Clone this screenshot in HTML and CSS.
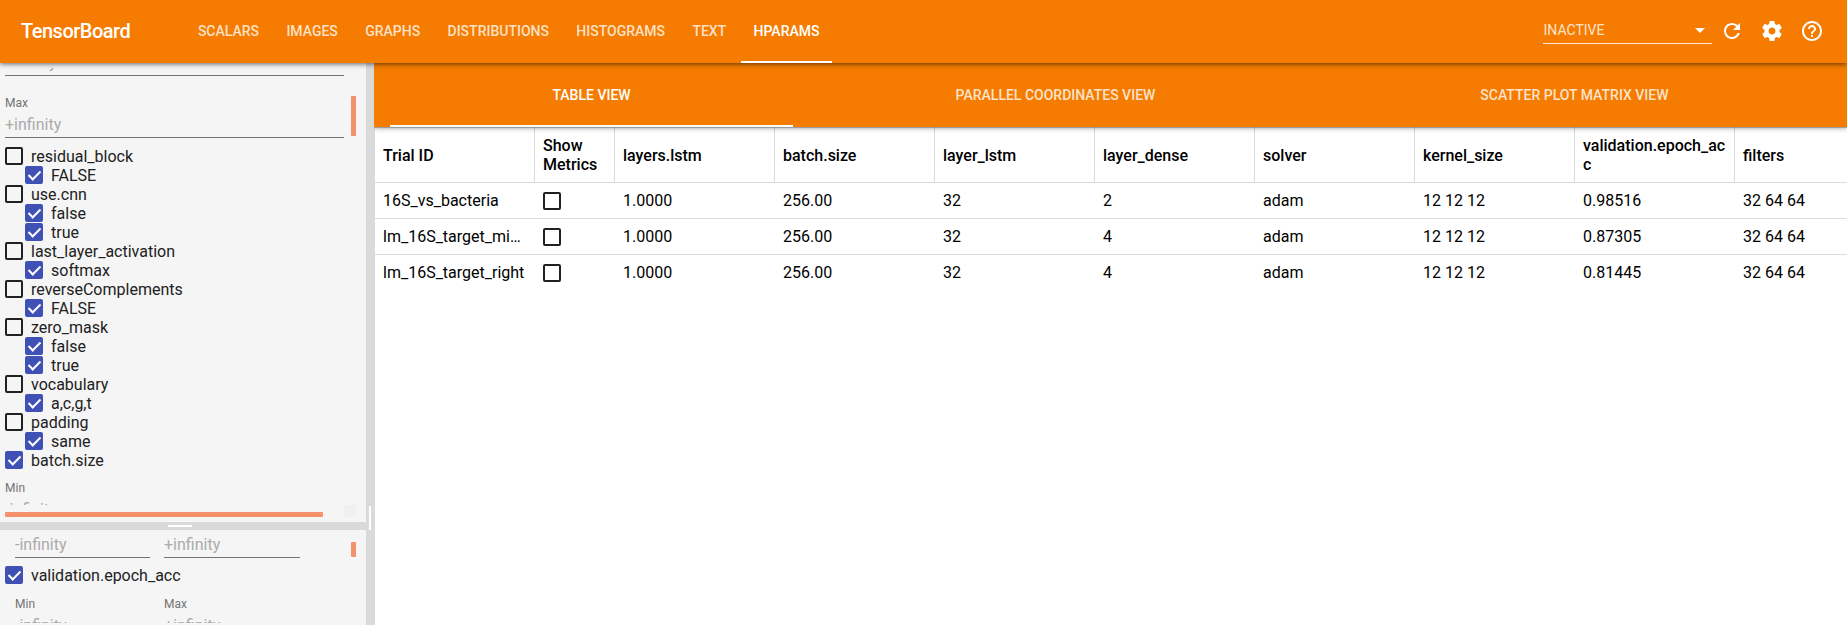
FILE: index.html
```html
<!DOCTYPE html>
<html lang="en">
<head>
<meta charset="utf-8">
<title>TensorBoard</title>
<link rel="stylesheet" href="styles.css">
</head>
<body>
<header class="toolbar">
  <div class="brand">TensorBoard</div>
  <nav class="plugins">
    <a class="plugin">SCALARS</a>
    <a class="plugin">IMAGES</a>
    <a class="plugin">GRAPHS</a>
    <a class="plugin">DISTRIBUTIONS</a>
    <a class="plugin">HISTOGRAMS</a>
    <a class="plugin">TEXT</a>
    <a class="plugin active">HPARAMS</a>
  </nav>
  <div class="inactive-menu"><span>INACTIVE</span><svg class="arrow" width="24" height="24" viewBox="0 0 24 24"><path d="M7 10l5 5 5-5z"/></svg></div>
  <div class="actions">
    <svg width="24" height="24" viewBox="0 0 24 24"><path d="M17.65 6.35C16.2 4.9 14.21 4 12 4c-4.42 0-7.99 3.58-7.99 8s3.57 8 7.99 8c3.73 0 6.84-2.55 7.73-6h-2.08c-.82 2.33-3.04 4-5.65 4-3.31 0-6-2.69-6-6s2.69-6 6-6c1.66 0 3.14.69 4.22 1.78L13 11h7V4l-2.35 2.35z"/></svg>
    <svg width="24" height="24" viewBox="0 0 24 24"><path d="M19.43 12.98c.04-.32.07-.64.07-.98s-.03-.66-.07-.98l2.11-1.65c.19-.15.24-.42.12-.64l-2-3.46c-.12-.22-.39-.3-.61-.22l-2.49 1c-.52-.4-1.08-.73-1.69-.98l-.38-2.65C14.46 2.18 14.25 2 14 2h-4c-.25 0-.46.18-.49.42l-.38 2.65c-.61.25-1.17.59-1.69.98l-2.49-1c-.23-.09-.49 0-.61.22l-2 3.46c-.13.22-.07.49.12.64l2.11 1.65c-.04.32-.07.65-.07.98s.03.66.07.98l-2.11 1.65c-.19.15-.24.42-.12.64l2 3.46c.12.22.39.3.61.22l2.49-1c.52.4 1.08.73 1.69.98l.38 2.65c.03.24.24.42.49.42h4c.25 0 .46-.18.49-.42l.38-2.65c.61-.25 1.17-.59 1.69-.98l2.49 1c.23.09.49 0 .61-.22l2-3.46c.12-.22.07-.49-.12-.64l-2.11-1.65zM12 15.5c-1.93 0-3.5-1.57-3.5-3.5s1.57-3.5 3.5-3.5 3.5 1.57 3.5 3.5-1.57 3.5-3.5 3.5z"/></svg>
    <svg width="24" height="24" viewBox="0 0 24 24"><path d="M11 18h2v-2h-2v2zm1-16C6.48 2 2 6.48 2 12s4.48 10 10 10 10-4.48 10-10S17.52 2 12 2zm0 18c-4.41 0-8-3.59-8-8s3.59-8 8-8 8 3.59 8 8-3.59 8-8 8zm0-14c-2.21 0-4 1.79-4 4h2c0-1.1.9-2 2-2s2 .9 2 2c0 2-3 1.75-3 5h2c0-2.25 3-2.5 3-5 0-2.21-1.79-4-4-4z"/></svg>
  </div>
</header>
<main class="dashboard">
  <aside class="sidebar">
    <section class="pane hyperparameters">
      <div class="scroll">
        <div class="scrolled-upper">
          <div class="field unlabelled"><div class="input">-infinity</div></div>
          <div class="field"><label>Max</label><div class="input">+infinity</div></div>
          <div class="option"><i class="box"></i>residual_block</div>
          <div class="option value"><i class="box checked"></i>FALSE</div>
          <div class="option"><i class="box"></i>use.cnn</div>
          <div class="option value"><i class="box checked"></i>false</div>
          <div class="option value"><i class="box checked"></i>true</div>
          <div class="option"><i class="box"></i>last_layer_activation</div>
          <div class="option value"><i class="box checked"></i>softmax</div>
          <div class="option"><i class="box"></i>reverseComplements</div>
          <div class="option value"><i class="box checked"></i>FALSE</div>
          <div class="option"><i class="box"></i>zero_mask</div>
          <div class="option value"><i class="box checked"></i>false</div>
          <div class="option value"><i class="box checked"></i>true</div>
          <div class="option"><i class="box"></i>vocabulary</div>
          <div class="option value"><i class="box checked"></i>a,c,g,t</div>
          <div class="option"><i class="box"></i>padding</div>
          <div class="option value"><i class="box checked"></i>same</div>
          <div class="option"><i class="box checked"></i>batch.size</div>
          <div class="field"><label>Min</label><div class="input">-infinity</div></div>
        </div>
      </div>
      <div class="vtrack"><div class="thumb vthumb-upper"></div></div>
      <div class="htrack"><div class="thumb hthumb"></div></div>
      <div class="corner"></div>
    </section>
    <div class="splitter-h"><div class="grip-h"></div></div>
    <section class="pane metrics">
      <div class="scroll">
        <div class="scrolled-lower">
          <div class="range">
            <div class="field unlabelled"><div class="input">-infinity</div></div>
            <div class="field unlabelled"><div class="input">+infinity</div></div>
          </div>
          <div class="option metric"><i class="box checked"></i>validation.epoch_acc</div>
          <div class="range">
            <div class="field"><label>Min</label><div class="input">-infinity</div></div>
            <div class="field"><label>Max</label><div class="input">+infinity</div></div>
          </div>
        </div>
      </div>
      <div class="vtrack"><div class="thumb vthumb-lower"></div></div>
    </section>
  </aside>
  <div class="splitter-v"><div class="grip-v"></div></div>
  <section class="content">
    <nav class="views">
      <a class="view active">TABLE VIEW</a>
      <a class="view">PARALLEL COORDINATES VIEW</a>
      <a class="view">SCATTER PLOT MATRIX VIEW</a>
    </nav>
    <div class="grid">
      <div class="row head">
        <div>Trial ID</div><div>Show Metrics</div><div>layers.lstm</div><div>batch.size</div><div>layer_lstm</div><div>layer_dense</div><div>solver</div><div>kernel_size</div><div>validation.epoch_acc</div><div>filters</div>
      </div>
      <div class="row">
        <div>16S_vs_bacteria</div><div><i class="box"></i></div><div>1.0000</div><div>256.00</div><div>32</div><div>2</div><div>adam</div><div>12 12 12</div><div>0.98516</div><div>32 64 64</div>
      </div>
      <div class="row">
        <div>lm_16S_target_middle</div><div><i class="box"></i></div><div>1.0000</div><div>256.00</div><div>32</div><div>4</div><div>adam</div><div>12 12 12</div><div>0.87305</div><div>32 64 64</div>
      </div>
      <div class="row">
        <div>lm_16S_target_right</div><div><i class="box"></i></div><div>1.0000</div><div>256.00</div><div>32</div><div>4</div><div>adam</div><div>12 12 12</div><div>0.81445</div><div>32 64 64</div>
      </div>
    </div>
  </section>
</main>
</body>
</html>
```
FILE: styles.css
```css
* { box-sizing: border-box; }
html, body { height: 100%; }
body {
  margin: 0;
  display: flex;
  flex-direction: column;
  overflow: hidden;
  background: #fff;
  color: #212121;
  font: 16px/19px Roboto, "Liberation Sans", sans-serif;
}

/* Top bar */
.toolbar {
  position: relative;
  z-index: 2;
  flex: none;
  height: 63px;
  display: flex;
  align-items: center;
  padding: 0 23px 0 21px;
  background: #f57c00;
  color: #fff;
  box-shadow: 0 1px 5px rgba(0, 0, 0, .6);
}
.brand {
  width: 164.4px;
  font-size: 20px;
  font-weight: 500;
  letter-spacing: -0.5px;
}
.plugins { display: flex; height: 100%; gap: 2.35px; }
.plugin {
  display: flex;
  align-items: center;
  padding: 0 12.5px;
  border-bottom: 2px solid transparent;
  border-top: 2px solid transparent;
  font-size: 14px;
  font-weight: 500;
  color: rgba(255, 255, 255, .78);
}
.plugin.active { color: #fff; border-bottom-color: #fff; }
.inactive-menu {
  margin-left: auto;
  width: 169px;
  height: 28px;
  display: flex;
  align-items: center;
  justify-content: space-between;
  border-bottom: 1px solid rgba(255, 255, 255, .85);
  margin-bottom: 3px;
  font-size: 14px;
  color: rgba(255, 255, 255, .8);
}
.inactive-menu span { padding: 1px 0 0 .5px; }
.arrow { fill: #fff; }
.actions { display: flex; gap: 16px; margin: 0 0 1px 8px; }
.actions svg { fill: #fff; display: block; }

/* Split layout */
.dashboard { flex: 1; min-height: 0; display: flex; }
.sidebar { width: 366px; flex: none; display: flex; flex-direction: column; background: #f5f5f5; }
.pane {
  display: grid;
  grid-template-columns: 339px 12px;
  padding: 5px;
  overflow: hidden;
}
.hyperparameters { height: 459px; grid-template-rows: 437px 12px; flex: none; }
.metrics { height: 95px; grid-template-rows: 88px; flex: none; }
.scroll { overflow: hidden; }
.scrolled-upper { margin-top: -17px; }
.scrolled-lower { margin-top: -2px; }

.splitter-h {
  flex: none;
  height: 8px;
  display: flex;
  align-items: center;
  justify-content: center;
  background: #dadada;
}
.grip-h { width: 24px; height: 2px; background: #fff; margin-right: 6px; }
.splitter-v { width: 9px; flex: none; background: #dadada; display: flex; justify-content: center; }
.grip-v { width: 2px; height: 24px; background: #fff; margin: 443px 1px 0 0; }

.vtrack { display: flex; justify-content: flex-end; }
.htrack { display: flex; align-items: flex-end; }
.corner { background: #f1f0ef; }
.thumb { background: #f4916a; border-radius: 1px; }
.vthumb-upper { width: 5px; height: 40px; margin-top: 28px; }
.vthumb-lower { width: 5px; height: 15px; margin-top: 7px; }
.hthumb { width: 318px; height: 5px; }

/* Form controls */
.field { height: 62px; padding-top: 8px; }
.field.unlabelled { height: 34px; padding-top: 0; }
.field label { display: block; height: 20px; font-size: 12px; line-height: 20px; color: #737373; }
.input {
  height: 25px;
  line-height: 24px;
  color: #ababab;
  border-bottom: 1px solid #737373;
}
.range { display: grid; grid-template-columns: 135px 136px; gap: 14px; margin-left: 10px; }
.option { display: flex; height: 19px; align-items: flex-start; gap: 8px; }
.value { padding-left: 20px; }
.metric { margin: -1px 0 1px; }
.box {
  display: block;
  flex: none;
  width: 18px;
  height: 18px;
  border: 2px solid #212121;
  border-radius: 2px;
}
.box.checked { position: relative; border-color: #3f51b5; background: #3f51b5; }
.box.checked::after {
  content: "";
  position: absolute;
  left: 4px;
  top: 0;
  width: 5px;
  height: 10px;
  border: solid #fff;
  border-width: 0 2px 2px 0;
  transform: rotate(45deg);
}

/* Session table */
.content { flex: 1; min-width: 0; margin-left: -1px; }
.views {
  position: relative;
  height: 64px;
  display: flex;
  padding: 0 16px;
  background: #f57c00;
  box-shadow: 0 1px 0 rgba(0, 0, 0, .2), 0 1px 5px rgba(0, 0, 0, .4);
  clip-path: inset(0 0 -8px 0);
}
.view {
  flex: 1 1 auto;
  display: flex;
  align-items: center;
  justify-content: center;
  padding: 0 12px;
  border-top: 2px solid transparent;
  border-bottom: 2px solid transparent;
  font-size: 14px;
  font-weight: 500;
  color: rgba(255, 255, 255, .8);
}
.view.active { color: #fff; border-bottom-color: #fff; }
.grid { margin-left: 1px; overflow: hidden; color: #000; }
.row {
  display: grid;
  grid-template-columns: 160px 80px repeat(8, 160px);
  height: 36px;
  width: 1520px;
}
.row:not(:last-child) { border-bottom: 1px solid #dadada; }
.row > div {
  padding: 8px 8px 0;
  white-space: nowrap;
  overflow: hidden;
  text-overflow: ellipsis;
}
.row .box { margin-top: 1px; }
.row.head { height: 56px; font-weight: 500; }
.row.head > div {
  display: flex;
  align-items: center;
  padding: 1.9px 8px 0;
  border-right: 1px solid #dadada;
  white-space: normal;
  overflow-wrap: anywhere;
}
```
